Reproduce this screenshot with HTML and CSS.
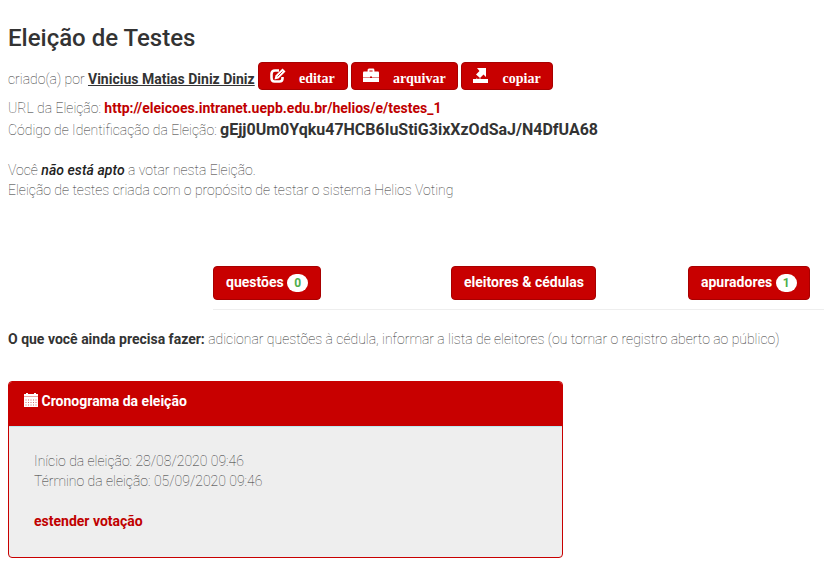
FILE: index.html
```html
<!DOCTYPE html>
<html lang="pt-BR"><head><meta charset="utf-8"><title>Eleição de Testes</title><link rel="stylesheet" href="styles.css"></head>
<body>
<h3>Eleição de Testes</h3>
<div class="owner"><span class="by">criado(a) por <u><b>Vinicius Matias Diniz Diniz</b></u></span>
<a class="btn act edit"><svg width="16" height="16" viewBox="0 0 16 16"><path d="M9 2.500H5Q1.500 2.500 1.500 6v4q0 3.500 3 3.500h5q3 0 3-3V9" fill="none" stroke="#fff" stroke-width="2.600"/><path d="M5.500 7.500l7-7L15.500 3.500l-7 7-4 1z" fill="#fff"/><path d="M7.500 8.500l5-5" stroke="#c80000" stroke-width=".8"/></svg><span>editar</span></a>
<a class="btn act archive"><svg width="16" height="16" viewBox="0 0 16 16"><path d="M5.500 4V2q0-.5.5-.5h4q.5 0 .5.5v2" fill="none" stroke="#fff" stroke-width="1.800"/><path d="M1 3.500h14q1 0 1 1V14H0V4.500q0-1 1-1z" fill="#fff"/><path d="M0 9.500h7M9 9.500h7" stroke="#dc6666" stroke-width=".8"/><path d="M7 8.500h2v1.500H7z" fill="#c80000"/></svg><span>arquivar</span></a>
<a class="btn act copy"><svg width="16" height="16" viewBox="0 0 16 16"><path d="M4 0h9v9l-2.500-2.500L7 10 3 6.500 6.500 3z" fill="#fff"/><path d="M3 10l2 1.500L8 10" fill="none" stroke="#e68080"/><path d="M0 11h15v4H0z" fill="#fff"/></svg><span>copiar</span></a></div>
<div class="url">URL da Eleição: <a>http://eleicoes.intranet.uepb.edu.br/helios/e/testes_1</a></div>
<div class="code">Código de Identificação da Eleição: <b>gEjj0Um0Yqku47HCB6IuStiG3ixXzOdSaJ/N4DfUA68</b></div>
<p class="desc">Você <em>não está apto</em> a votar nesta Eleição.<br>Eleição de testes criada com o propósito de testar o sistema Helios Voting</p>
<nav><a class="btn">questões <i>0</i></a><a class="btn">eleitores &amp; cédulas</a><a class="btn">apuradores <i>1</i></a></nav>
<p class="todo"><b>O que você ainda precisa fazer:</b> <span>adicionar questões à cédula, informar a lista de eleitores (ou tornar o registro aberto ao público)</span></p>
<section><header><svg width="14" height="14" viewBox="0 0 14 14"><path d="M0 1h2V0h2v1h6V0h2v1h2v3H0zM0 4h14v10H0z" fill="#fff"/><path d="M1.500 7h11M1.500 9.500h11M1.500 12h11" stroke="#d46a6a" stroke-width="1" stroke-dasharray="1 1.500"/><path d="M0 3.500h14" stroke="#e9a0a0"/></svg>Cronograma da eleição</header>
<div class="body"><span>Início da eleição: 28/08/2020 09:46</span><br><span>Término da eleição: 05/09/2020 09:46</span><br><br><a>estender votação</a></div></section>
</body></html>
```
FILE: styles.css
```css
*{box-sizing:border-box}
body{margin:0;padding:0 0 0 8px;font:100 14px/20px Roboto,sans-serif;color:#333;height:573px;overflow:hidden;background:#fff}
h3{margin:25px 0 10px;font-size:24px;line-height:27px;font-weight:500;color:#333}
b{font-weight:700;color:#333}
.owner{display:flex;align-items:center;height:28px;gap:3px}
.by{padding-top:6px}
.btn{background:#c80000;border:1px solid #a80000;border-radius:4px;color:#fff;font-weight:700}
.act{height:28px;display:flex;align-items:center;font-family:"Liberation Serif",serif;justify-content:space-between;padding:0 12px 0 11px}
.act span{padding-top:5px}
.copy span,.archive span{margin-right:-1px}
.edit{width:90px}.archive{width:107px}.copy{width:92px}
.url{margin-top:8px}.url a,.body a{color:#c00000;font-weight:700}
.code{margin-top:2px}.code b{font-size:16px}
.desc{margin:20px 0 0}em{color:#222;font-weight:500;letter-spacing:.06px}
nav{display:grid;grid-template-columns:238px 237px 1fr;margin:66px 0 0 205px;height:44px;border-bottom:1px solid #eee;align-items:start}
nav .btn{justify-self:start;height:34px;padding:5px 12px;line-height:20px;white-space:nowrap}
nav .btn:nth-child(2){padding-right:11px}
nav i{display:inline-block;background:#fff;color:#4cae4c;border-radius:10px;width:21px;text-align:center;line-height:18px;font-size:12px;font-style:normal;vertical-align:0}
.todo{margin:19px 0 32px}
section{width:555px;height:177px;border:1px solid #c80000;border-radius:4px;background:#eee;overflow:hidden}
header{height:45px;background:#c80000;color:#fff;font-weight:700;padding:9px 15px;display:flex;gap:3.500px;border-bottom:1px solid #bce8f1}
header svg{margin-top:2px}
.body{padding:24px 25px}
```
